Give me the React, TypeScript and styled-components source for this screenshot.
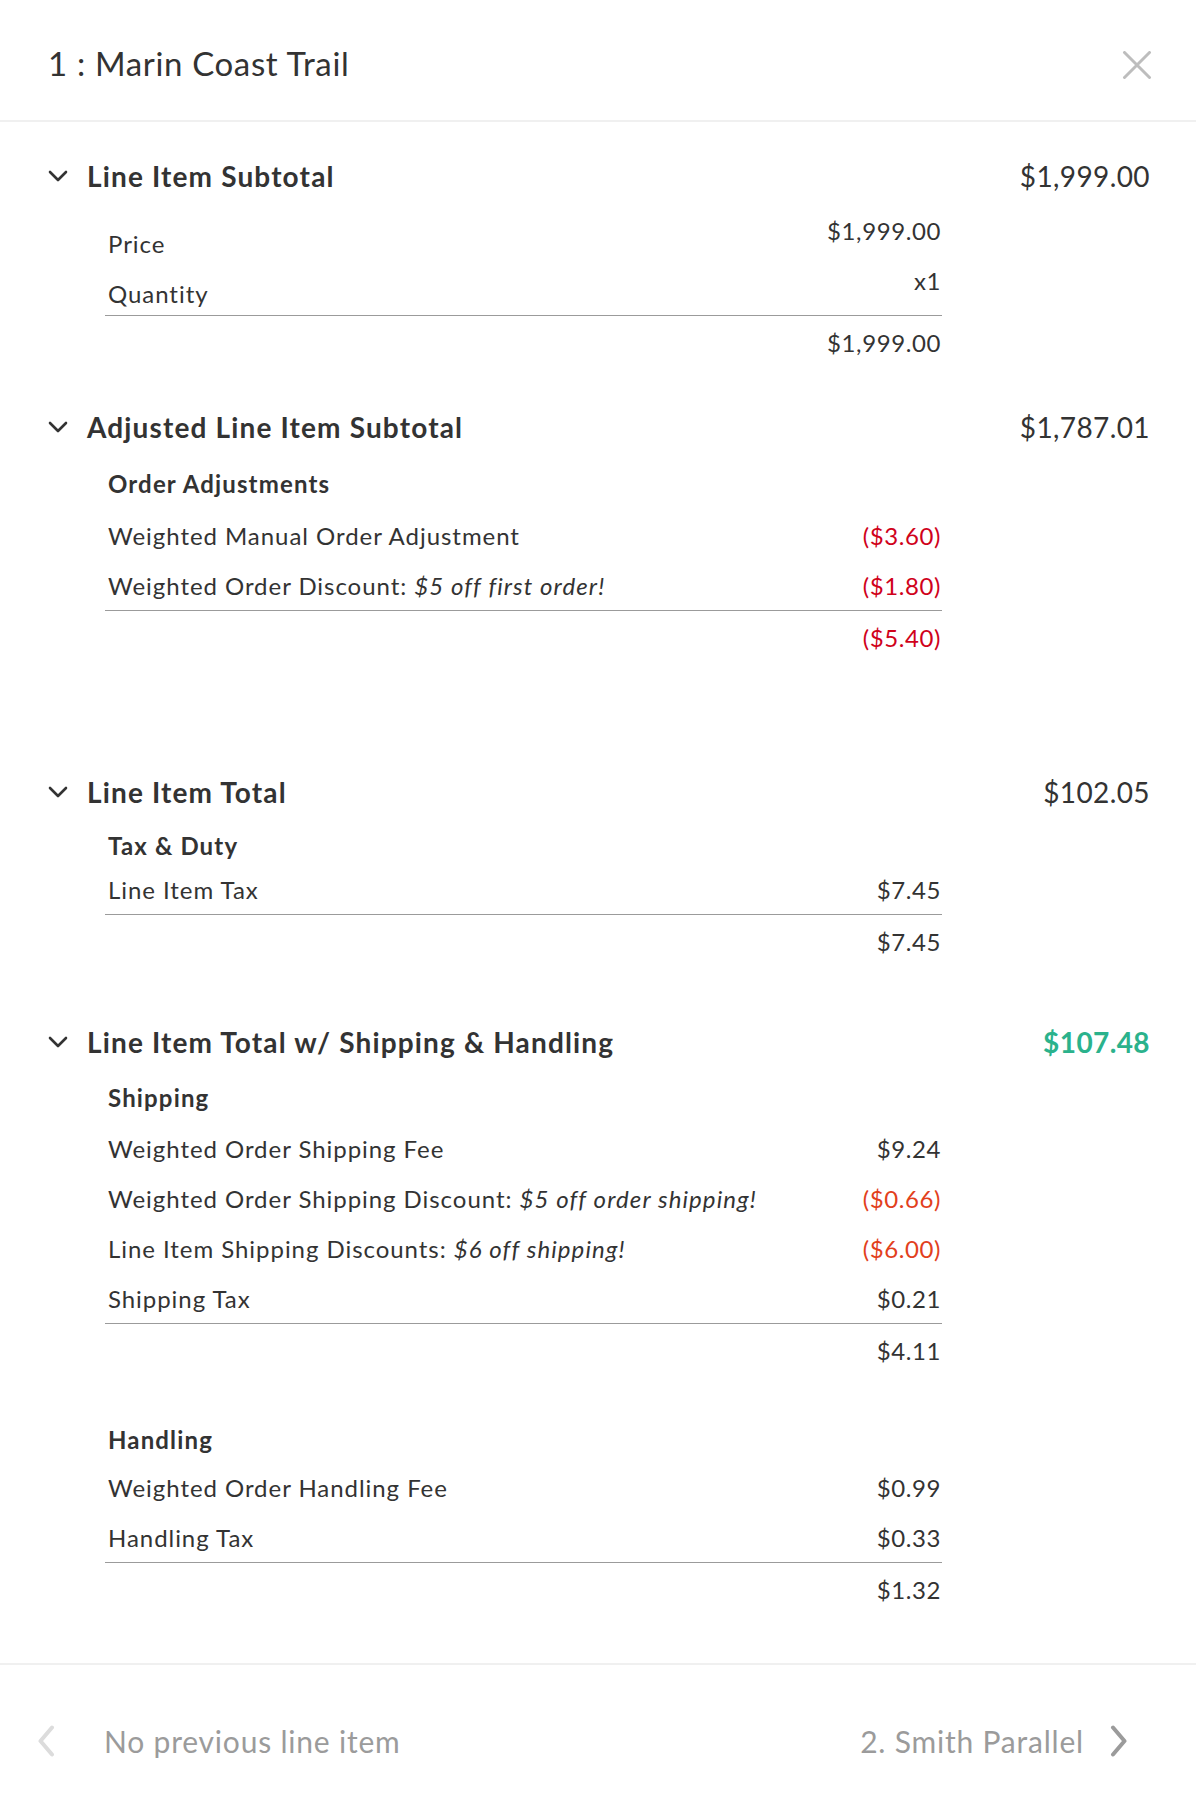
import React from "react";
import styled, { createGlobalStyle } from "styled-components";

const FONT = `"Lato", "Open Sans", "Liberation Sans", sans-serif`;

const GlobalStyle = createGlobalStyle`
  html, body {
    margin: 0;
    padding: 0;
    background: #fff;
  }
  body {
    font-family: ${FONT};
    color: #333;
    -webkit-font-smoothing: antialiased;
  }
  * {
    box-sizing: border-box;
  }
`;

type Tone = "neg" | "alert";

type LineType = {
  label: string;
  promo?: string;
  value: string;
  tone?: Tone;
  lift?: boolean;
};

type GroupType = {
  title?: string;
  titleHeight?: number;
  gap: number;
  lines: LineType[];
  total: string;
  totalTone?: Tone;
};

type SectionType = {
  title: string;
  value: string;
  highlight?: boolean;
  gap: number;
  groups: GroupType[];
};

const SECTIONS: SectionType[] = [
  {
    title: "Line Item Subtotal",
    value: "$1,999.00",
    gap: 0,
    groups: [
      {
        gap: 14,
        lines: [
          { label: "Price", value: "$1,999.00", lift: true },
          { label: "Quantity", value: "x1", lift: true },
        ],
        total: "$1,999.00",
      },
    ],
  },
  {
    title: "Adjusted Line Item Subtotal",
    value: "$1,787.01",
    gap: 32,
    groups: [
      {
        title: "Order Adjustments",
        titleHeight: 46,
        gap: 12,
        lines: [
          { label: "Weighted Manual Order Adjustment", value: "($3.60)", tone: "neg" },
          {
            label: "Weighted Order Discount: ",
            promo: "$5 off first order!",
            value: "($1.80)",
            tone: "neg",
          },
        ],
        total: "($5.40)",
        totalTone: "neg",
      },
    ],
  },
  {
    title: "Line Item Total",
    value: "$102.05",
    gap: 102,
    groups: [
      {
        title: "Tax & Duty",
        titleHeight: 30,
        gap: 17,
        lines: [{ label: "Line Item Tax", value: "$7.45" }],
        total: "$7.45",
      },
    ],
  },
  {
    title: "Line Item Total w/ Shipping & Handling",
    value: "$107.48",
    highlight: true,
    gap: 48,
    groups: [
      {
        title: "Shipping",
        titleHeight: 44,
        gap: 12,
        lines: [
          { label: "Weighted Order Shipping Fee", value: "$9.24" },
          {
            label: "Weighted Order Shipping Discount: ",
            promo: "$5 off order shipping!",
            value: "($0.66)",
            tone: "alert",
          },
          {
            label: "Line Item Shipping Discounts: ",
            promo: "$6 off shipping!",
            value: "($6.00)",
            tone: "alert",
          },
          { label: "Shipping Tax", value: "$0.21" },
        ],
        total: "$4.11",
      },
      {
        title: "Handling",
        titleHeight: 38,
        gap: 40,
        lines: [
          { label: "Weighted Order Handling Fee", value: "$0.99" },
          { label: "Handling Tax", value: "$0.33" },
        ],
        total: "$1.32",
      },
    ],
  },
];

const toneColor = (tone?: Tone) =>
  tone === "neg" ? "#d0021b" : tone === "alert" ? "#e2401c" : "#333";

/* ------------------------ ICONS ---------------------- */

function CloseIcon() {
  return (
    <svg width="30" height="28" viewBox="0 0 30 28" fill="none">
      <path d="M2.5 1.5 L27.5 26.5 M27.5 1.5 L2.5 26.5" stroke="#bdbdbd" strokeWidth="3" strokeLinecap="round" />
    </svg>
  );
}

function ChevronDown() {
  return (
    <svg width="20" height="12" viewBox="0 0 20 12" fill="none">
      <path d="M2 2 L10 10 L18 2" stroke="#333" strokeWidth="2.6" strokeLinecap="round" strokeLinejoin="round" />
    </svg>
  );
}

function ChevronSide({ dir, color }: { dir: "left" | "right"; color: string }) {
  const d = dir === "left" ? "M15 2.5 L3.5 16 L15 29.5" : "M3 2.5 L14.5 16 L3 29.5";
  return (
    <svg width="18" height="32" viewBox="0 0 18 32" fill="none">
      <path d={d} stroke={color} strokeWidth="4" strokeLinecap="round" strokeLinejoin="round" />
    </svg>
  );
}

/* ------------------------ HEADER ---------------------- */

const Page = styled.div`
  display: flex;
  flex-direction: column;
  min-height: 100vh;
  width: 100%;
  background: #fff;
`;

const Header = styled.header`
  display: flex;
  align-items: center;
  justify-content: space-between;
  height: 122px;
  padding: 5px 44px 0 48px;
  border-bottom: 2px solid #f0f0f0;
`;

const Title = styled.h1`
  margin: 0;
  font-family: ${FONT};
  font-size: 33px;
  font-weight: 400;
  color: #333;
  letter-spacing: 0.65px;
`;

const CloseButton = styled.button`
  display: flex;
  align-items: center;
  justify-content: center;
  margin-top: 4px;
  padding: 0;
  border: none;
  background: none;
  cursor: pointer;
`;

/* ------------------------ BODY ---------------------- */

const Body = styled.main`
  flex: 1;
  padding: 32px 46px 40px 48px;
`;

const Section = styled.section<{ $gap: number }>`
  margin-top: ${(p) => p.$gap}px;
`;

const SectionHead = styled.div`
  display: flex;
  align-items: center;
  height: 44px;
  gap: 19px;
`;

const SectionTitle = styled.h2`
  flex: 1;
  margin: 0;
  font-size: 28px;
  font-weight: 700;
  letter-spacing: 1.15px;
  color: #333;
`;

const SectionValue = styled.span<{ $highlight?: boolean }>`
  font-size: 28px;
  letter-spacing: 0.4px;
  font-weight: ${(p) => (p.$highlight ? 700 : 400)};
  color: ${(p) => (p.$highlight ? "#2bb28c" : "#333")};
`;

const Group = styled.div<{ $gap: number }>`
  width: 837px;
  margin-left: 57px;
  padding-top: ${(p) => p.$gap}px;
`;

const GroupTitle = styled.div<{ $height: number }>`
  height: ${(p) => p.$height}px;
  line-height: ${(p) => p.$height}px;
  padding-left: 3px;
  font-size: 24px;
  font-weight: 700;
  letter-spacing: 1.15px;
  color: #333;
`;

const LineList = styled.div`
  padding-bottom: 3px;
  border-bottom: 1px solid #9b9b9b;
`;

const LineRow = styled.div`
  display: flex;
  align-items: center;
  justify-content: space-between;
  height: 44px;
  margin-top: 6px;
  padding: 0 1px 0 3px;
`;

const LineLabel = styled.span<{ $lift?: boolean }>`
  font-size: 24px;
  letter-spacing: 0.95px;
  color: #333;
  padding-top: ${(p) => (p.$lift ? 7 : 0)}px;

  em {
    font-style: italic;
    letter-spacing: 1.1px;
  }
`;

const LineValue = styled.span<{ $tone?: Tone; $lift?: boolean }>`
  font-size: 24px;
  letter-spacing: 0.6px;
  color: ${(p) => toneColor(p.$tone)};
  padding-bottom: ${(p) => (p.$lift ? 19 : 0)}px;
`;

const TotalRow = styled.div<{ $tone?: Tone }>`
  display: flex;
  align-items: center;
  justify-content: flex-end;
  height: 57px;
  padding: 0 1px 5px 0;
  font-size: 24px;
  letter-spacing: 0.6px;
  color: ${(p) => toneColor(p.$tone)};
`;

/* ------------------------ FOOTER ---------------------- */

const Footer = styled.footer`
  display: flex;
  align-items: center;
  justify-content: space-between;
  height: 157px;
  padding: 0 68px 4px 37px;
  border-top: 2px solid #f0f0f0;
`;

const NavLink = styled.div<{ $gap: number; $muted?: boolean }>`
  display: flex;
  align-items: center;
  gap: ${(p) => p.$gap}px;
  font-size: 30px;
  letter-spacing: 0.8px;
  color: #9b9b9b;
  cursor: ${(p) => (p.$muted ? "default" : "pointer")};
`;

/* ------------------------ APP ---------------------- */

function BreakdownGroup({ group }: { group: GroupType }) {
  return (
    <Group $gap={group.gap}>
      {group.title && <GroupTitle $height={group.titleHeight || 40}>{group.title}</GroupTitle>}
      <LineList>
        {group.lines.map((line) => (
          <LineRow key={line.label}>
            <LineLabel $lift={line.lift}>
              {line.label}
              {line.promo && <em>{line.promo}</em>}
            </LineLabel>
            <LineValue $tone={line.tone} $lift={line.lift}>
              {line.value}
            </LineValue>
          </LineRow>
        ))}
      </LineList>
      <TotalRow $tone={group.totalTone}>{group.total}</TotalRow>
    </Group>
  );
}

export default function App() {
  return (
    <Page>
      <GlobalStyle />
      <Header>
        <Title>1 : Marin Coast Trail</Title>
        <CloseButton aria-label="Close">
          <CloseIcon />
        </CloseButton>
      </Header>
      <Body>
        {SECTIONS.map((section) => (
          <Section key={section.title} $gap={section.gap}>
            <SectionHead>
              <ChevronDown />
              <SectionTitle>{section.title}</SectionTitle>
              <SectionValue $highlight={section.highlight}>{section.value}</SectionValue>
            </SectionHead>
            {section.groups.map((group, i) => (
              <BreakdownGroup key={i} group={group} />
            ))}
          </Section>
        ))}
      </Body>
      <Footer>
        <NavLink $gap={49} $muted>
          <ChevronSide dir="left" color="#dcdcdc" />
          No previous line item
        </NavLink>
        <NavLink $gap={26}>
          2. Smith Parallel
          <ChevronSide dir="right" color="#9b9b9b" />
        </NavLink>
      </Footer>
    </Page>
  );
}
